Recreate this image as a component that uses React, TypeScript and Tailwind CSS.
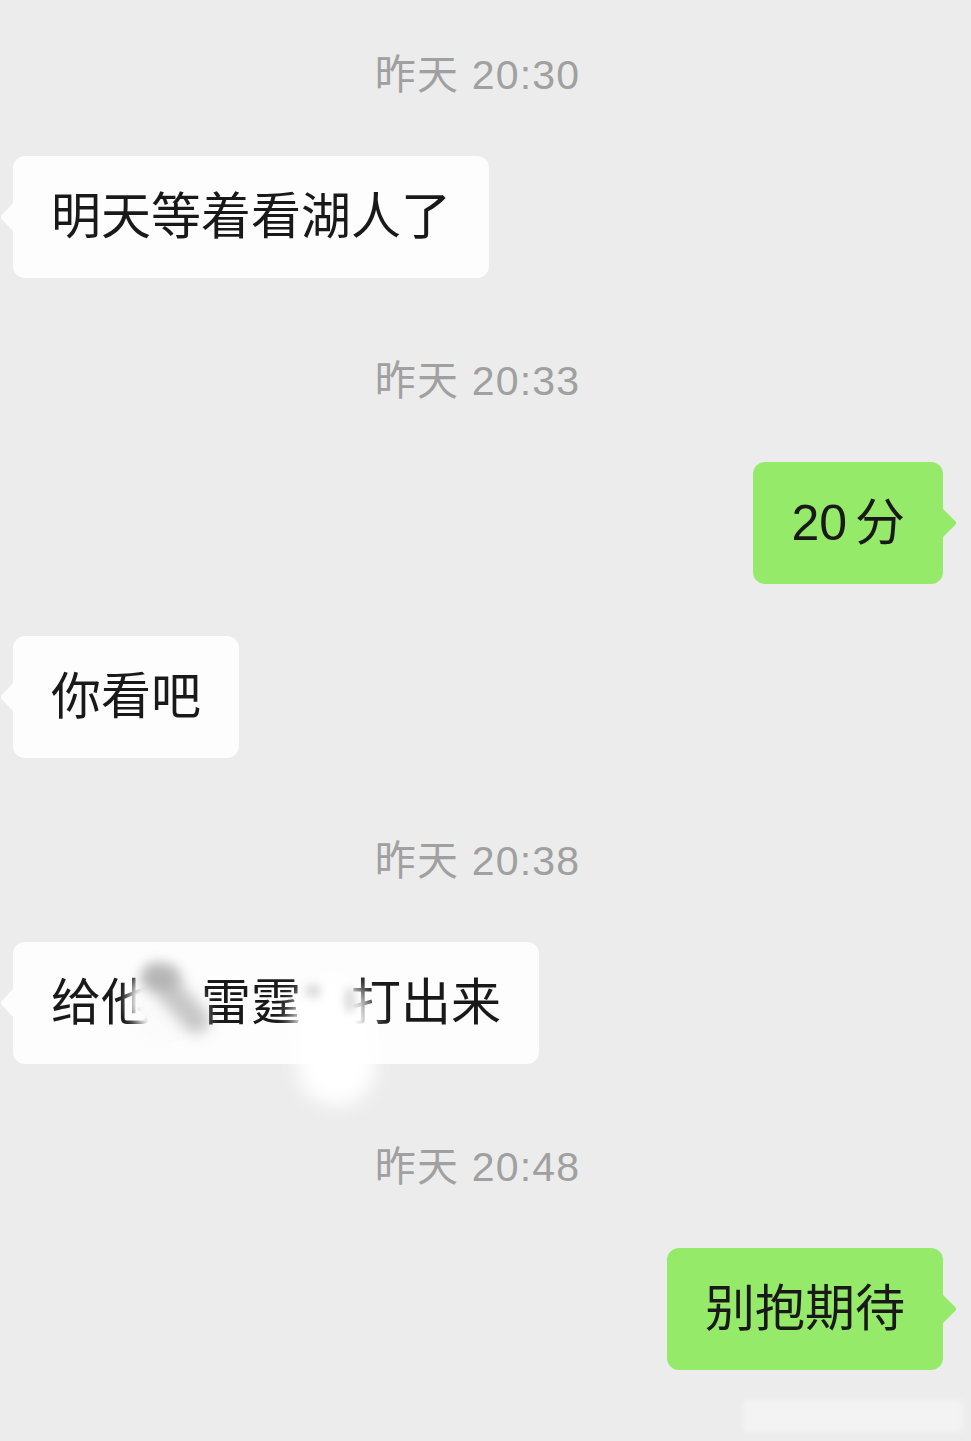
import React from 'react';

type Side = 'left' | 'right';

const FONT = { fontFamily: '"Liberation Sans", "Noto Sans CJK SC", sans-serif' };

function TimeStamp({ text, first }: { text: string; first?: boolean }) {
  return (
    <div
      className={`flex justify-center pr-[16px] ${first ? 'mt-0' : 'mt-[83px]'} mb-[61px]`}
    >
      <span className="text-[41px] leading-[40px] text-[#a0a0a0] tracking-[1.2px]">{text}</span>
    </div>
  );
}

function Tail({ side }: { side: Side }) {
  if (side === 'left') {
    return (
      <svg
        className="absolute left-[-13px] top-1/2 -translate-y-1/2"
        width="14"
        height="32"
        viewBox="0 0 14 32"
      >
        <path d="M14 1 L1.6 14.2 Q0 16 1.6 17.8 L14 31 Z" fill="#fdfdfd" />
      </svg>
    );
  }
  return (
    <svg
      className="absolute right-[-14px] top-1/2 -translate-y-1/2"
      width="15"
      height="32"
      viewBox="0 0 15 32"
    >
      <path d="M0 1 L13.4 14.2 Q15 16 13.4 17.8 L0 31 Z" fill="#95ea69" />
    </svg>
  );
}

function Bubble({ side, children, mt }: { side: Side; children: React.ReactNode; mt: string }) {
  const isLeft = side === 'left';
  return (
    <div className={`flex ${isLeft ? 'justify-start pl-[13px]' : 'justify-end pr-[28px]'} ${mt}`}>
      <div
        className={`relative h-[122px] px-[38px] rounded-[12px] flex items-center text-[50px] leading-none text-[#191919] ${
          isLeft ? 'bg-[#fdfdfd]' : 'bg-[#95ea69]'
        }`}
      >
        <Tail side={side} />
        {children}
      </div>
    </div>
  );
}

function SmudgedLine() {
  return (
    <span className="relative inline-flex">
      <span>给他</span>
      <span className="relative text-transparent">
        们
        {/* smear hiding the word: white body with a soft grey band on its upper edge */}
        <span className="absolute left-[-24px] top-[-4px] w-[78px] h-[64px] rounded-full bg-[#fbfbfb] blur-[6px] rotate-[40deg]" />
        <span className="absolute left-[-16px] top-[8px] w-[84px] h-[26px] rounded-full bg-[#a4a4a4] blur-[7px] opacity-60 rotate-[48deg]" />
        <span className="absolute left-[-10px] top-[-14px] w-[40px] h-[26px] rounded-full bg-[#a8a8a8] blur-[6px] opacity-60" />
      </span>
      <span>雷霆</span>
      <span className="relative text-transparent">
        队
        <span className="absolute left-[-6px] top-[0px] w-[78px] h-[128px] rounded-[40px] bg-white blur-[9px] rotate-[-6deg]" />
        <span className="absolute left-[4px] top-[6px] w-[16px] h-[14px] rounded-full bg-[#c4c4c4] blur-[4px] opacity-60" />
        <span className="absolute left-[44px] top-[10px] w-[10px] h-[24px] rounded-full bg-[#c0c0c0] blur-[4px] opacity-60" />
      </span>
      <span>打出来</span>
    </span>
  );
}

export default function App() {
  return (
    <div className="min-h-[1441px] w-full bg-[#ececec] pt-[55px] overflow-hidden" style={FONT}>
      <TimeStamp text="昨天 20:30" first />
      <Bubble side="left" mt="mt-0">
        明天等着看湖人了
      </Bubble>

      <TimeStamp text="昨天 20:33" />
      <Bubble side="right" mt="mt-0">
        <span>
          20<span className="ml-[8px]">分</span>
        </span>
      </Bubble>
      <Bubble side="left" mt="mt-[52px]">
        你看吧
      </Bubble>

      <TimeStamp text="昨天 20:38" />
      <Bubble side="left" mt="mt-0">
        <SmudgedLine />
      </Bubble>

      <TimeStamp text="昨天 20:48" />
      <Bubble side="right" mt="mt-0">
        别抱期待
      </Bubble>

      {/* faint watermark strip */}
      <div className="flex justify-end pr-[8px] mt-[30px]">
        <div className="w-[220px] h-[32px] bg-white/40 blur-[3px]" />
      </div>
    </div>
  );
}
